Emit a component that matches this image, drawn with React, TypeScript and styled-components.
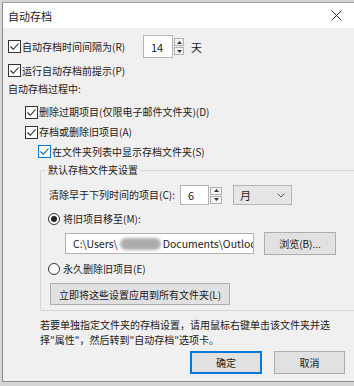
import styled, { createGlobalStyle } from "styled-components"

const Global = createGlobalStyle`
html, body {
    margin: 0;
    padding: 0;
    background: #d6d6d6;
    overflow: hidden;
}
body {
    font-family: "Noto Sans CJK SC", "Microsoft YaHei", sans-serif;
    font-size: 10px;
    color: #1b1b1b;
}
`

const Window = styled.div`
margin: 2px 0 0 2px;
width: 352px;
height: 380px;
box-sizing: border-box;
border-left: 1px solid #8c8c8c;
border-top: 1px solid #a0a0a0;
border-bottom: 1px solid #8c8c8c;
background: #f0f0f0;
display: flex;
flex-direction: column;
`

const TitleBar = styled.div`
height: 25px;
flex-shrink: 0;
background: #fff;
display: flex;
align-items: center;
justify-content: space-between;
padding: 0 12px 0 5px;
font-size: 11px;
color: #222;
`

const Body = styled.div`
display: flex;
flex-direction: column;
padding-left: 5px;
`

const Row = styled.div<{ $top: number; $h: number; $indent?: number }>`
display: flex;
align-items: center;
height: ${({ $h }) => $h}px;
margin-top: ${({ $top }) => $top}px;
padding-left: ${({ $indent }) => $indent ?? 0}px;
white-space: nowrap;
`

const Box = styled.span<{ $focus?: boolean }>`
width: 13px;
height: 13px;
box-sizing: border-box;
border: 1px solid ${({ $focus }) => ($focus ? "#0078d7" : "#333")};
background: #fff;
margin-right: 1px;
display: flex;
align-items: center;
justify-content: center;
flex-shrink: 0;
svg { display: block; }
`

const Radio = styled.span<{ $on?: boolean }>`
width: 12px;
height: 12px;
box-sizing: border-box;
border-radius: 50%;
border: 1px solid #333;
background: #fff;
margin-right: 3px;
display: flex;
align-items: center;
justify-content: center;
flex-shrink: 0;
&::after {
    content: '';
    width: 6px;
    height: 6px;
    border-radius: 50%;
    background: ${({ $on }) => ($on ? "#222" : "transparent")};
}
`

const Text = styled.span<{ $w?: number; $gap?: number; $size?: number }>`
display: inline-block;
${({ $w }) => ($w ? `width: ${$w}px;` : "")}
margin-left: ${({ $gap }) => $gap ?? 0}px;
font-size: ${({ $size }) => $size ?? 10}px;
line-height: 14px;
`

const Input = styled.div<{ $w: number; $h: number; $size?: number }>`
width: ${({ $w }) => $w}px;
height: ${({ $h }) => $h}px;
box-sizing: border-box;
border: 1px solid #b4b4b4;
background: #fff;
display: flex;
align-items: center;
padding-left: 7px;
font-size: ${({ $size }) => $size ?? 11}px;
overflow: hidden;
white-space: nowrap;
flex-shrink: 0;
`

const Arrows = styled.div<{ $w: number }>`
display: flex;
flex-direction: column;
gap: 1px;
margin-left: 1px;
width: ${({ $w }) => $w}px;
flex-shrink: 0;
`

const ArrowBtn = styled.div`
height: 8px;
box-sizing: border-box;
border: 1px solid #b0b0b0;
background: #f4f4f4;
display: flex;
align-items: center;
justify-content: center;
`

const Select = styled.div`
margin-left: 11px;
width: 59px;
height: 20px;
box-sizing: border-box;
border: 1px solid #b4b4b4;
background: #e6e6e6;
display: flex;
align-items: center;
justify-content: space-between;
padding: 0 6px 0 6px;
font-size: 11px;
`

const Group = styled.fieldset`
margin: 2px 0 0 32px;
padding: 0 0 5px 5px;
border: 1px solid #d8d8d8;
border-right: none;
min-width: 0;
display: flex;
flex-direction: column;
legend {
    padding: 0 2px;
    line-height: 14px;
}
`

const Button = styled.div<{ $w: number; $h: number; $primary?: boolean; $gap?: number }>`
width: ${({ $w }) => $w}px;
height: ${({ $h }) => $h}px;
margin-left: ${({ $gap }) => $gap ?? 0}px;
box-sizing: border-box;
border: ${({ $primary }) => ($primary ? "2px solid #0078d7" : "1px solid #adadad")};
background: #e1e1e1;
display: flex;
align-items: center;
justify-content: center;
flex-shrink: 0;
`

const Blur = styled.span`
flex-shrink: 0;
display: inline-block;
width: 41px;
height: 12px;
border-radius: 6px;
background: #acacac;
filter: blur(1.5px);
margin: 0 2px 0 2px;
`

const Note = styled.p`
margin: 6px 0 0 32px;
line-height: 15px;
white-space: nowrap;
`

const Footer = styled.div`
display: flex;
justify-content: flex-end;
gap: 12px;
margin-top: 4px;
padding-right: 9px;
`

function Check({ focus }: { focus?: boolean }) {
    const c = focus ? "#1a4f8a" : "#222"
    return (
        <Box $focus={focus}>
            <svg width="11" height="11" viewBox="0 0 11 11">
                <path d="M1.5 5.5 L4.3 8.3 L9.5 2.5" fill="none" stroke={c} strokeWidth="1.1" />
            </svg>
        </Box>
    )
}

function Spin({ value, w, h, aw }: { value: string; w: number; h: number; aw: number }) {
    return (
        <>
            <Input $w={w} $h={h}>{value}</Input>
            <Arrows $w={aw}>
                <ArrowBtn>
                    <svg width="5" height="3" viewBox="0 0 5 3"><path d="M0 3 L2.5 0 L5 3Z" fill="#333" /></svg>
                </ArrowBtn>
                <ArrowBtn>
                    <svg width="5" height="3" viewBox="0 0 5 3"><path d="M0 0 L2.5 3 L5 0Z" fill="#333" /></svg>
                </ArrowBtn>
            </Arrows>
        </>
    )
}

export default function App() {
    return (
        <>
            <Global />
            <Window>
                <TitleBar>
                    <span>自动存档</span>
                    <svg width="11" height="11" viewBox="0 0 11 11">
                        <path d="M0.5 0.5 L10.5 10.5 M10.5 0.5 L0.5 10.5" stroke="#333" strokeWidth="1" />
                    </svg>
                </TitleBar>
                <Body>
                    <Row $top={7} $h={23}>
                        <Check />
                        <Text $w={121}>自动存档时间间隔为(R)</Text>
                        <Spin value="14" w={30} h={23} aw={10} />
                        <Text $gap={7} $size={11}>天</Text>
                    </Row>
                    <Row $top={3} $h={19}>
                        <Check />
                        <Text>运行自动存档前提示(P)</Text>
                    </Row>
                    <Row $top={1} $h={16}>
                        <Text>自动存档过程中:</Text>
                    </Row>
                    <Row $top={6} $h={18} $indent={17}>
                        <Check />
                        <Text>删除过期项目(仅限电子邮件文件夹)(D)</Text>
                    </Row>
                    <Row $top={2} $h={18} $indent={17}>
                        <Check />
                        <Text>存档或删除旧项目(A)</Text>
                    </Row>
                    <Row $top={1} $h={19} $indent={30}>
                        <Check focus />
                        <Text>在文件夹列表中显示存档文件夹(S)</Text>
                    </Row>
                    <Group>
                        <legend>默认存档文件夹设置</legend>
                        <Row $top={8} $h={20} $indent={3}>
                            <Text $w={131}>清除早于下列时间的项目(C):</Text>
                            <Spin value="6" w={29} h={20} aw={12} />
                            <Select>
                                <span>月</span>
                                <svg width="8" height="5" viewBox="0 0 8 5">
                                    <path d="M0.5 0.5 L4 4 L7.5 0.5" fill="none" stroke="#555" strokeWidth="1" />
                                </svg>
                            </Select>
                        </Row>
                        <Row $top={7} $h={14} $indent={2}>
                            <Radio $on />
                            <Text>将旧项目移至(M):</Text>
                        </Row>
                        <Row $top={6} $h={23} $indent={19}>
                            <Input $w={189} $h={21} $size={10.5}>
                                C:\Users\<Blur />Documents\Outloc
                            </Input>
                            <Button $w={72} $h={23} $gap={10}>浏览(B)...</Button>
                        </Row>
                        <Row $top={7} $h={14} $indent={2}>
                            <Radio />
                            <Text>永久删除旧项目(E)</Text>
                        </Row>
                        <Row $top={7} $h={22} $indent={4}>
                            <Button $w={180} $h={22}>立即将这些设置应用到所有文件夹(L)</Button>
                        </Row>
                    </Group>
                    <Note>
                        若要单独指定文件夹的存档设置，请用鼠标右键单击该文件夹并选
                        <br />
                        择"属性"，然后转到"自动存档"选项卡。
                    </Note>
                    <Footer>
                        <Button $w={72} $h={23} $primary>确定</Button>
                        <Button $w={71} $h={23}>取消</Button>
                    </Footer>
                </Body>
            </Window>
        </>
    )
}
